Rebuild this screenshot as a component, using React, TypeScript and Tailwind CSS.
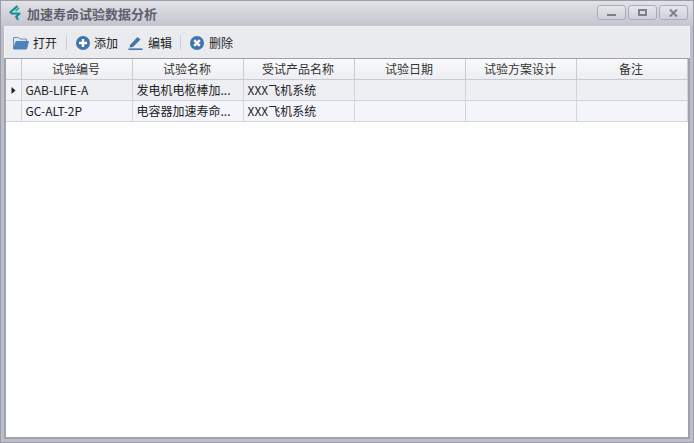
const font = { fontFamily: '"Noto Sans CJK SC", "Liberation Sans", sans-serif' };

const columns = ["试验编号", "试验名称", "受试产品名称", "试验日期", "试验方案设计", "备注"];

const rows = [
  { code: "GAB-LIFE-A", name: "发电机电枢棒加...", product: "XXX飞机系统", current: true },
  { code: "GC-ALT-2P", name: "电容器加速寿命...", product: "XXX飞机系统", current: false },
];

function Logo() {
  return (
    <svg width="14" height="16" viewBox="0 0 14 16" fill="none" className="-mt-[2px]">
      <path d="M9.5 1 L2.5 7 L3.5 8.5 L11.5 8.5 L7.5 12.5" stroke="#12908c" strokeWidth="2.2" strokeLinejoin="round" />
      <path d="M11 3 L7.5 6" stroke="#3aa7b5" strokeWidth="2" />
      <path d="M8.5 12 L10 15" stroke="#12908c" strokeWidth="2" />
    </svg>
  );
}

function WinButton({ children }: { children: React.ReactNode }) {
  return (
    <div className="flex h-[15px] w-[29px] items-center justify-center rounded-[3px] border border-[#a9abb8] bg-gradient-to-b from-[#e6e7ec] to-[#cfd1d9]">
      {children}
    </div>
  );
}

function Divider({ className }: { className: string }) {
  return <div className={`h-[15px] w-px bg-[#cdcfd6] ${className}`} />;
}

function ToolButton({ icon, label, gap }: { icon: React.ReactNode; label: string; gap: string }) {
  return (
    <div className={`flex items-center text-[12px] text-[#222] ${gap}`}>
      {icon}
      <span className="mt-[1px]">{label}</span>
    </div>
  );
}

function Cell({ children, className }: { children?: React.ReactNode; className?: string }) {
  return (
    <div className={`h-[21px] truncate border-r border-b border-[#d3d5dc] pl-[3.5px] pr-[2px] text-[12px] leading-[20px] text-[#222] ${className ?? ""}`}>
      {children}
    </div>
  );
}

export default function App() {
  return (
    <div style={font} className="flex h-[443px] w-[694px] flex-col overflow-hidden border border-[#9a9ca8] bg-[#bcbec9]">
      <div className="flex h-[25px] shrink-0 items-center bg-gradient-to-b from-[#e2e3e7] to-[#c3c5cf] pl-[7px] pr-[5px]">
        <Logo />
        <span className="ml-[5px] text-[13px] font-bold text-[#5d5f6b]">加速寿命试验数据分析</span>
        <div className="-mt-[2px] ml-auto flex gap-[2px]">
          <WinButton>
            <div className="mt-[4px] h-[2px] w-[9px] bg-[#7d7f8c]" />
          </WinButton>
          <WinButton>
            <div className="h-[7px] w-[9px] border-2 border-[#7d7f8c]" />
          </WinButton>
          <WinButton>
            <svg width="9" height="8" viewBox="0 0 9 8">
              <path d="M1 0.5 L8 7.5 M8 0.5 L1 7.5" stroke="#7d7f8c" strokeWidth="2" />
            </svg>
          </WinButton>
        </div>
      </div>
      <div className="mx-[3px] mb-[3px] flex min-h-0 flex-1 flex-col">
        <div className="flex h-[32px] shrink-0 items-center border-x border-t border-[#f1f2f5] bg-[#e9ebef] pl-[8px]">
          <ToolButton
            gap="gap-[4px]"
            icon={
              <svg width="16" height="14" viewBox="0 0 16 14">
                <path d="M0.5 13 V1.5 H5.5 L7 3 H13.5 V5" fill="#e4e8ee" stroke="#6d8fb3" />
                <path d="M0.5 13 L3 5.5 H15.5 L13.5 13 Z" fill="#4f82b8" stroke="#4f82b8" />
              </svg>
            }
            label="打开"
          />
          <Divider className="ml-[9px] mr-[9px]" />
          <ToolButton
            gap="gap-[4px]"
            icon={
              <svg width="14" height="14" viewBox="0 0 14 14">
                <circle cx="7" cy="7" r="7" fill="#3f76ae" />
                <path d="M7 3 V11 M3 7 H11" stroke="#fff" strokeWidth="2.4" />
              </svg>
            }
            label="添加"
          />
          <div className="w-[10px]" />
          <ToolButton
            gap="gap-[5px]"
            icon={
              <svg width="15" height="14" viewBox="0 0 15 14">
                <path d="M2 9 L9.5 1 L12.5 3.5 L5 11 L1.5 11.5 Z" fill="#3f76ae" />
                <path d="M0.5 13.2 H14.5" stroke="#3f76ae" strokeWidth="1.6" />
              </svg>
            }
            label="编辑"
          />
          <Divider className="ml-[8px] mr-[9px]" />
          <ToolButton
            gap="gap-[5px]"
            icon={
              <svg width="14" height="14" viewBox="0 0 14 14">
                <circle cx="7" cy="7" r="7" fill="#3f76ae" />
                <path d="M4.2 4.2 L9.8 9.8 M9.8 4.2 L4.2 9.8" stroke="#fff" strokeWidth="2.4" />
              </svg>
            }
            label="删除"
          />
        </div>
        <div className="flex min-h-0 flex-1 flex-col border-x-2 border-b-2 border-[#a0a2ae] bg-white">
          <div className="grid grid-cols-[16px_repeat(5,111px)_1fr] border-t border-[#9d9fab]">
            <div className="h-[21px] border-r border-b border-[#c9cbd3] bg-gradient-to-b from-[#fafafb] to-[#eceef2]" />
            {columns.map((c) => (
              <div
                key={c}
                className="h-[21px] border-r border-b border-[#c9cbd3] bg-gradient-to-b from-[#fafafb] to-[#eceef2] pr-[2px] text-center text-[12px] leading-[19px] text-[#333]"
              >
                {c}
              </div>
            ))}
            {rows.map((r) => {
              const bg = r.current ? "bg-[#eeeff2]" : "bg-[#f3f5fb]";
              return (
                <div key={r.code} className="contents">
                  <div className="flex h-[21px] items-center justify-center border-r border-b border-[#d3d5dc] bg-[#f3f4f7]">
                    {r.current && (
                      <svg width="5" height="7" viewBox="0 0 5 7">
                        <path d="M0.5 0 L4.5 3.5 L0.5 7 Z" fill="#222" />
                      </svg>
                    )}
                  </div>
                  <Cell className={bg}>{r.code}</Cell>
                  <Cell className={bg}>{r.name}</Cell>
                  <Cell className={bg}>{r.product}</Cell>
                  <Cell className={bg} />
                  <Cell className={bg} />
                  <Cell className={bg} />
                </div>
              );
            })}
          </div>
        </div>
      </div>
    </div>
  );
}
